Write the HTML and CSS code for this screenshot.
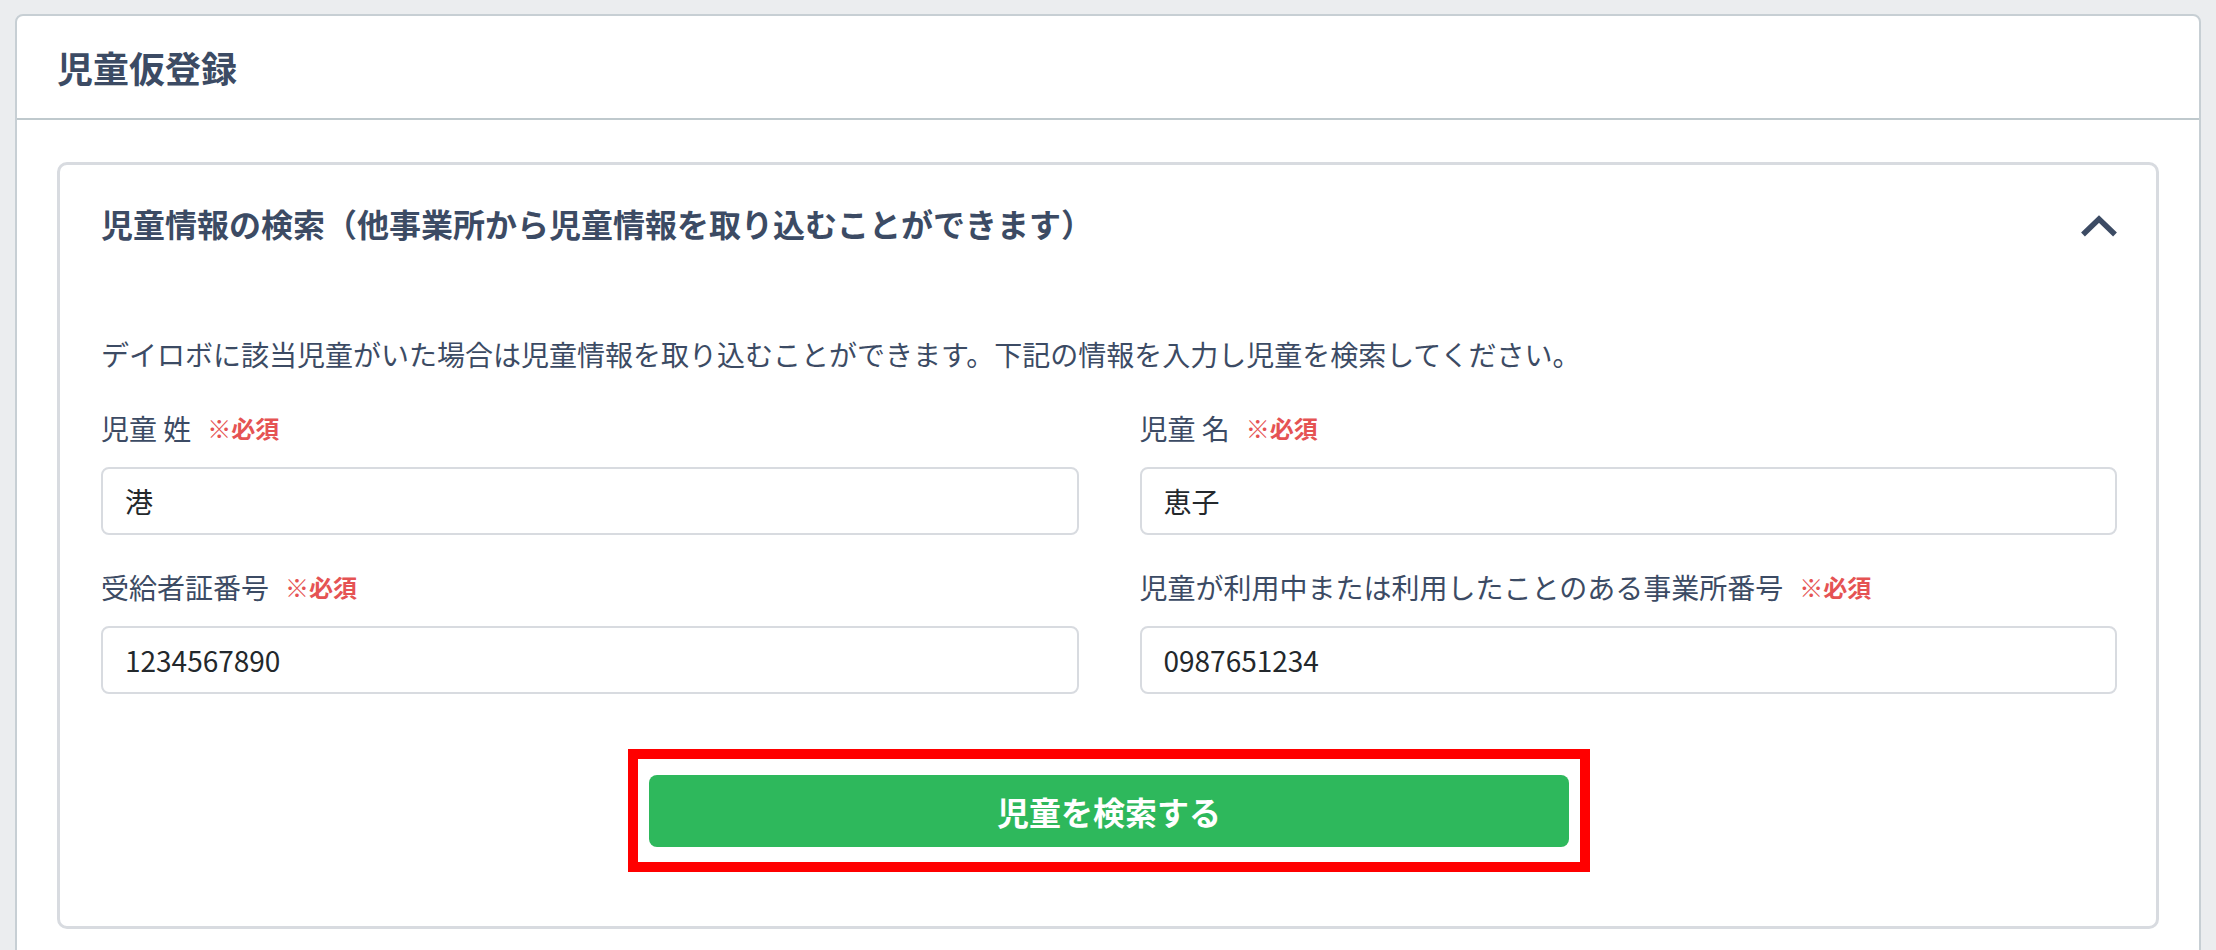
FILE: index.html
```html
<!DOCTYPE html>
<html lang="ja">
<head>
<meta charset="utf-8">
<title>児童仮登録</title>
<link rel="stylesheet" href="styles.css">
</head>
<body>
<div class="page">
  <div class="card">
    <div class="card-header">
      <h1 class="card-title">児童仮登録</h1>
    </div>
    <div class="card-body">
      <div class="search-card">
        <div class="search-head">
          <h2 class="search-title">児童情報の検索（他事業所から児童情報を取り込むことができます）</h2>
          <svg class="chevron" width="36" height="22" viewBox="0 0 36 22" aria-hidden="true">
            <polyline points="2,19.5 18,4 34,19.5" fill="none" stroke="#3c4b64" stroke-width="5.5" stroke-linejoin="miter"/>
          </svg>
        </div>
        <p class="desc">デイロボに該当児童がいた場合は児童情報を取り込むことができます。下記の情報を入力し児童を検索してください。</p>
        <div class="form-grid">
          <div class="form-group">
            <label class="label">児童 姓<span class="req">※必須</span></label>
            <div class="input">港</div>
          </div>
          <div class="form-group">
            <label class="label">児童 名<span class="req">※必須</span></label>
            <div class="input">恵子</div>
          </div>
          <div class="form-group">
            <label class="label">受給者証番号<span class="req">※必須</span></label>
            <div class="input">1234567890</div>
          </div>
          <div class="form-group">
            <label class="label">児童が利用中または利用したことのある事業所番号<span class="req">※必須</span></label>
            <div class="input">0987651234</div>
          </div>
        </div>
        <div class="actions">
          <div class="highlight">
            <button class="btn-search" type="button">児童を検索する</button>
          </div>
        </div>
      </div>
    </div>
  </div>
</div>
</body>
</html>
```
FILE: styles.css
```css
* { box-sizing: border-box; }
html, body { margin: 0; padding: 0; }
body {
  background: #ebedef;
  font-family: "Noto Sans CJK JP", "Noto Sans", sans-serif;
  color: #3c4b64;
}
.page {
  padding: 14px 15px 0 15px;
}
.card {
  background: #fff;
  border: 2px solid #c7cfd4;
  border-radius: 8px;
}
.card-header {
  padding: 24px 40px;
  border-bottom: 2px solid #bfc9cd;
}
.card-title {
  margin: 0;
  font-size: 36px;
  line-height: 54px;
  font-weight: 700;
  color: #3c4b64;
}
.card-body {
  padding: 42px 40px 42px 40px;
}
.search-card {
  border: 3px solid #d8dbe0;
  border-radius: 10px;
  padding: 34px 39px 54px 41px;
}
.search-head {
  display: flex;
  align-items: center;
  justify-content: space-between;
}
.search-title {
  margin: 0;
  font-size: 32px;
  line-height: 48px;
  font-weight: 700;
  color: #3c4b64;
}
.chevron { display: block; margin-top: 6px; }
.desc {
  margin: 87px 0 34px 0;
  font-size: 28px;
  line-height: 40px;
  color: #3c4b64;
}
.form-grid {
  display: grid;
  grid-template-columns: 1fr 1fr;
  column-gap: 61px;
  row-gap: 32px;
}
.form-group { display: flex; flex-direction: column; }
.label {
  display: flex;
  align-items: center;
  font-size: 28px;
  line-height: 40px;
  color: #3c4b64;
  margin-bottom: 19px;
}
.req {
  color: #e55353;
  font-weight: 700;
  font-size: 24px;
  margin-left: 16px;
}
.input {
  height: 68px;
  border: 2px solid #d8dbe0;
  border-radius: 8px;
  padding: 0 22px;
  display: flex;
  align-items: center;
  font-size: 28px;
  color: #23282c;
}
.actions {
  display: flex;
  justify-content: center;
  margin-top: 55px;
}
.highlight {
  border: 10px solid #ff0000;
  padding: 16px 11px 15px 11px;
}
.btn-search {
  display: block;
  width: 920px;
  height: 72px;
  border: none;
  border-radius: 8px;
  background: #2eb85c;
  color: #fff;
  font-family: "Noto Sans CJK JP", "Noto Sans", sans-serif;
  font-size: 32px;
  font-weight: 700;
  cursor: pointer;
}
```
